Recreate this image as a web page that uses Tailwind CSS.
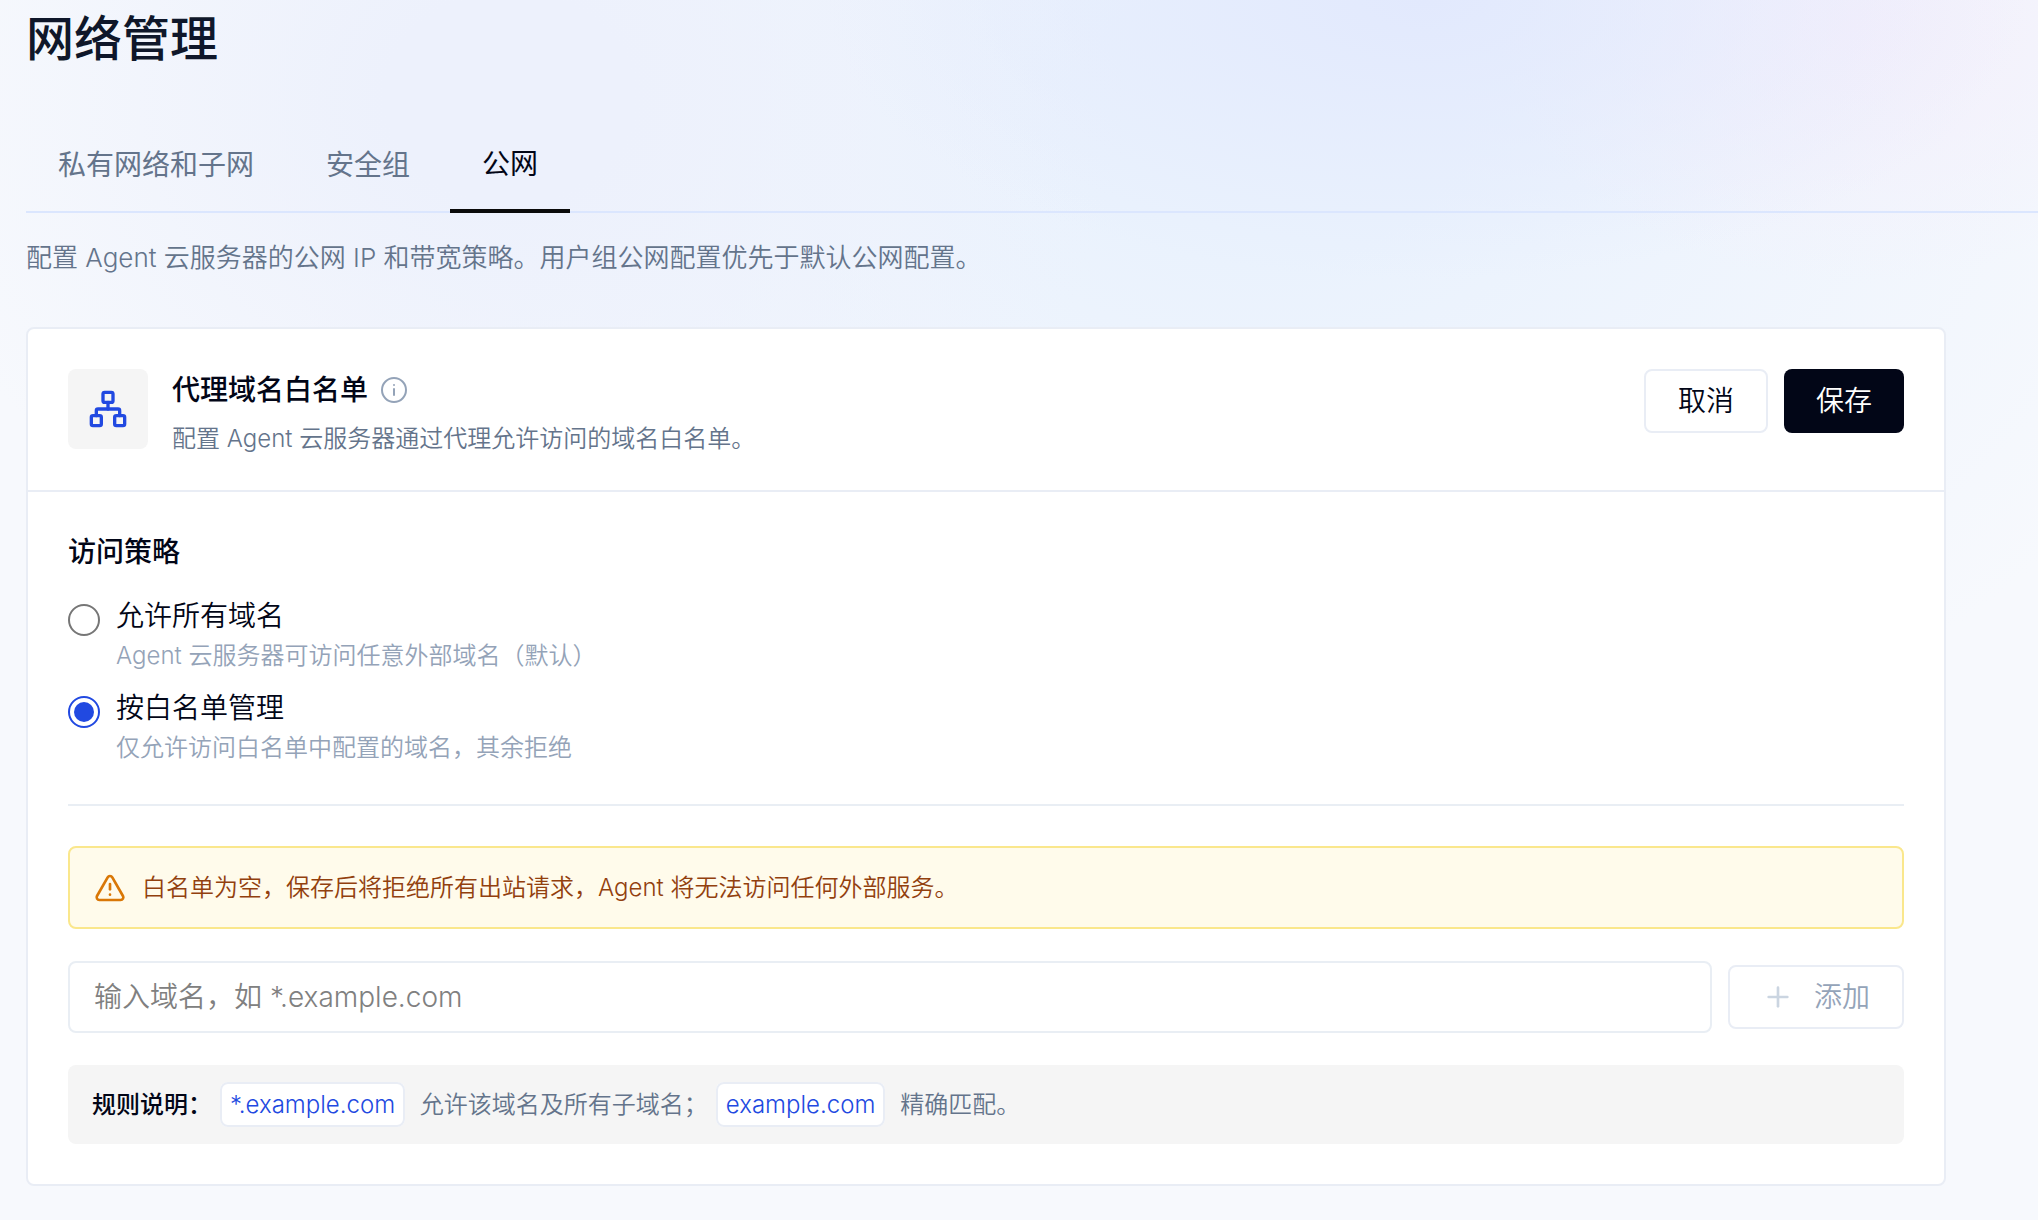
<!DOCTYPE html>
<html lang="zh-CN">
<head>
  <meta charset="UTF-8" />
  <meta name="viewport" content="width=device-width, initial-scale=1.0" />
  <title>网络管理</title>
  <script src="https://cdn.jsdelivr.net/npm/@tailwindcss/browser@4"></script>
</head>
<body class="min-h-screen overflow-x-hidden bg-[#f7f9fd] bg-[radial-gradient(ellipse_600px_280px_at_70%_0%,#e2e9fd_0%,#e2e9fd00_100%),radial-gradient(ellipse_360px_260px_at_91%_2%,#f4effb_0%,#f4effb00_100%),radial-gradient(ellipse_620px_520px_at_25%_8%,#edf1fc_20%,#edf1fc00_100%),radial-gradient(ellipse_1000px_700px_at_62%_10%,#eaf2fd_20%,#eaf2fd00_100%)] font-['Inter','Noto_Sans_CJK_SC',sans-serif] font-[350] text-[#020617]">
  <div class="pl-[26px]">
    <h1 class="pt-[15px] text-[48px] leading-[48px] font-medium text-[#0f172a]">网络管理</h1>

    <!-- Tabs -->
    <nav class="mt-[54px] flex gap-2 border-b-2 border-[#dbe6fe] text-[28px] leading-[42px] font-normal">
      <button type="button" class="-mb-0.5 h-24 px-8 text-[#64748b]">私有网络和子网</button>
      <button type="button" class="-mb-0.5 h-24 px-8 text-[#64748b]">安全组</button>
      <button type="button" class="-mb-0.5 h-24 border-b-4 border-[#0a0a0a] px-8 pt-0.5">公网</button>
    </nav>

    <p class="mt-6 text-[26px] leading-[42px] text-[#64748b]">配置 Agent 云服务器的公网 IP 和带宽策略。用户组公网配置优先于默认公网配置。</p>

    <main class="mt-12 mr-[92px] rounded-lg border-2 border-[#e9edf5] bg-white">
      <!-- Card header -->
      <div class="flex items-start justify-between border-b-2 border-[#e9edf5] px-10 pt-10 pb-8">
        <div class="flex gap-6">
          <div class="flex size-20 shrink-0 items-center justify-center rounded-lg bg-[#f5f5f5]">
            <svg class="size-10 text-[#2149e1]" viewBox="0 0 24 24" fill="none" stroke="currentColor" stroke-width="2" stroke-linecap="round" stroke-linejoin="round">
              <rect x="16" y="16" width="6" height="6" rx="1" />
              <rect x="2" y="16" width="6" height="6" rx="1" />
              <rect x="9" y="2" width="6" height="6" rx="1" />
              <path d="M5 16v-3a1 1 0 0 1 1-1h12a1 1 0 0 1 1 1v3" />
              <path d="M12 12V8" />
            </svg>
          </div>
          <div>
            <div class="flex items-center gap-3">
              <h2 class="text-[28px] leading-[42px] font-medium">代理域名白名单</h2>
              <svg class="size-7 text-[#94a3b8]" viewBox="0 0 28 28" fill="none" stroke="currentColor" stroke-width="2" stroke-linecap="round">
                <circle cx="14" cy="14" r="12" />
                <path d="M14 13v6" />
                <path d="M14 9v.1" />
              </svg>
            </div>
            <p class="mt-2 text-[24px] leading-[39px] text-[#64748b]">配置 Agent 云服务器通过代理允许访问的域名白名单。</p>
          </div>
        </div>
        <div class="flex gap-4 text-[28px]">
          <button type="button" class="h-16 rounded-lg border-2 border-[#e9edf5] px-8">取消</button>
          <button type="button" class="h-16 rounded-lg bg-[#020617] px-8 text-white">保存</button>
        </div>
      </div>

      <div class="px-10 py-10">
        <!-- Access policy -->
        <fieldset class="border-b-2 border-[#e9eef4] pb-9">
          <legend class="text-[28px] leading-[40px] font-medium">访问策略</legend>
          <div class="mt-6 flex flex-col gap-3">
            <label class="flex gap-4">
              <input type="radio" name="policy" value="all" class="mt-2 size-8 shrink-0 appearance-none rounded-full border-2 border-[#767676] bg-clip-content p-1 checked:border-[#2149e1] checked:bg-[#2149e1]" />
              <span>
                <span class="block text-[28px] leading-[40px]">允许所有域名</span>
                <span class="block text-[24px] leading-[40px] text-[#94a3b8]">Agent 云服务器可访问任意外部域名（默认）</span>
              </span>
            </label>
            <label class="flex gap-4">
              <input type="radio" name="policy" value="whitelist" checked class="mt-2 size-8 shrink-0 appearance-none rounded-full border-2 border-[#767676] bg-clip-content p-1 checked:border-[#2149e1] checked:bg-[#2149e1]" />
              <span>
                <span class="block text-[28px] leading-[40px]">按白名单管理</span>
                <span class="block text-[24px] leading-[40px] text-[#94a3b8]">仅允许访问白名单中配置的域名，其余拒绝</span>
              </span>
            </label>
          </div>
        </fieldset>

        <!-- Empty whitelist warning -->
        <div role="alert" class="mt-10 flex items-center gap-4 rounded-lg border-2 border-[#fae78c] bg-[#fffbeb] px-6 py-5 text-[24px] leading-[39px] text-[#92400e]">
          <svg class="size-8 shrink-0 text-[#d97706]" viewBox="0 0 24 24" fill="none" stroke="currentColor" stroke-width="2" stroke-linecap="round" stroke-linejoin="round">
            <path d="m21.73 18-8-14a2 2 0 0 0-3.48 0l-8 14A2 2 0 0 0 4 21h16a2 2 0 0 0 1.73-3" />
            <path d="M12 9v4" />
            <path d="M12 17h.01" />
          </svg>
          <p>白名单为空，保存后将拒绝所有出站请求，Agent 将无法访问任何外部服务。</p>
        </div>

        <form class="mt-8 flex items-center gap-4 text-[28px]">
          <input type="text" aria-label="域名" placeholder="输入域名，如 *.example.com" class="h-18 min-w-0 flex-1 rounded-lg border-2 border-[#e9eef4] px-6 placeholder:text-[#808080]" />
          <button type="button" disabled class="flex h-16 items-center gap-5 rounded-lg border-2 border-[#e9edf5] px-8 text-[#94a3b8]">
            <svg class="size-8 text-[#cbd5e1]" viewBox="0 0 24 24" fill="none" stroke="currentColor" stroke-width="2" stroke-linecap="round">
              <path d="M5 12h14" />
              <path d="M12 5v14" />
            </svg>
            添加
          </button>
        </form>

        <!-- Rule help -->
        <p class="mt-8 rounded-lg bg-[#f5f5f5] px-6 py-5 text-[24px] leading-[39px] text-[#64748b]">
          <strong class="font-medium text-[#020617]">规则说明：</strong><code class="mx-2 rounded-lg border-2 border-[#e9edf5] bg-white px-2 py-1.5 font-['Inter',sans-serif] text-[#2149e1]">*.example.com</code>
          允许该域名及所有子域名；<code class="mx-2 rounded-lg border-2 border-[#e9edf5] bg-white px-2 py-1.5 font-['Inter',sans-serif] text-[#2149e1]">example.com</code>
          精确匹配。
        </p>
      </div>
    </main>
  </div>
</body>
</html>
